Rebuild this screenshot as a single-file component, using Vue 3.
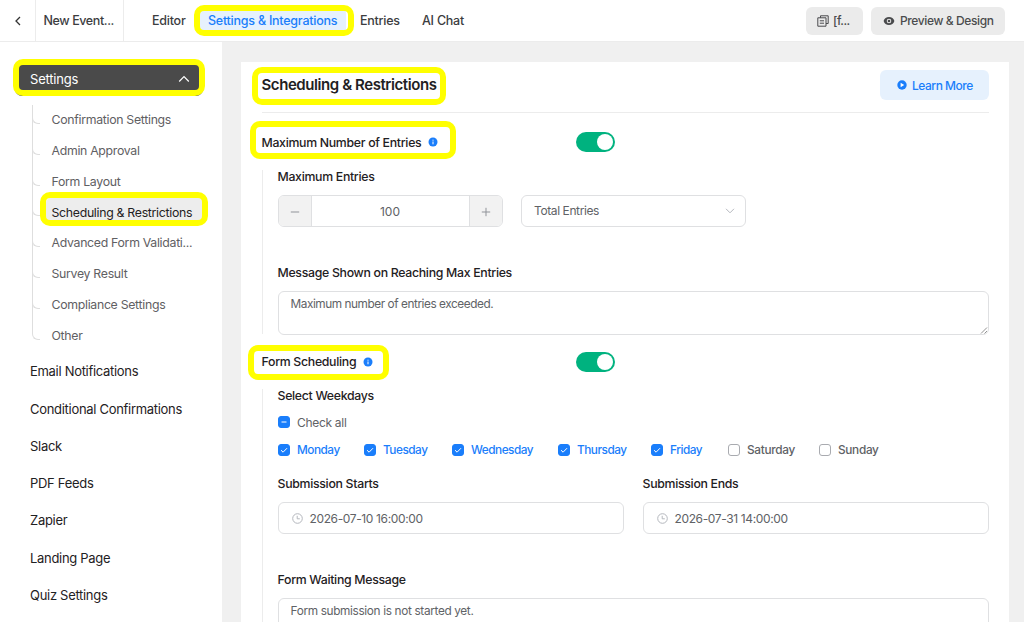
<template>
  <div class="app">
    <header class="topbar">
      <button class="back" aria-label="Back">
        <svg width="8" height="12" viewBox="0 0 8 12"><path d="M6 2 2 6l4 4" /></svg>
      </button>
      <div class="form-name">New Event...</div>
      <nav class="tabs">
        <a
          v-for="tab in tabs"
          :key="tab"
          class="tab"
          :class="{ active: tab === activeTab, marked: tab === activeTab }"
          @click="activeTab = tab"
        >{{ tab }}</a>
      </nav>
      <div class="actions">
        <button class="btn shortcode">
          <svg width="12" height="12" viewBox="0 0 12 12">
            <path d="M3.5 2.8V.8h7.7v7.7H9" />
            <path d="M.8 2.8H9v8.4H.8zM2.8 5.8H7M2.8 8.2H7" />
          </svg>
          <span>[f...</span>
        </button>
        <button class="btn preview">
          <svg width="12" height="10" viewBox="0 0 12 10">
            <path class="fill" fill-rule="evenodd" d="M6 1C3.4 1 1.3 2.6.6 5 1.3 7.4 3.4 9 6 9s4.700-1.600 5.400-4C10.700 2.600 8.600 1 6 1zm0 1.700a2.300 2.300 0 1 1 0 4.600 2.300 2.300 0 0 1 0-4.600z" />
            <circle class="fill" cx="6" cy="5" r="1.3" />
          </svg>
          <span>Preview &amp; Design</span>
        </button>
      </div>
    </header>

    <div class="body">
      <aside class="sidebar">
        <div class="menu-head marked">
          <span>Settings</span>
          <svg width="12" height="8" viewBox="0 0 12 8"><path d="M1.2 6.500 6 1.700l4.800 4.800" /></svg>
        </div>
        <ul class="submenu">
          <li
            v-for="item in subItems"
            :key="item"
            :class="{ current: item === currentItem, marked: item === currentItem }"
          ><span>{{ item }}</span></li>
        </ul>
        <ul class="menu">
          <li v-for="item in menuItems" :key="item">{{ item }}</li>
        </ul>
      </aside>

      <main class="content">
        <section class="card">
          <div class="card-head">
            <h1 class="marked">Scheduling &amp; Restrictions</h1>
            <button class="btn learn">
              <svg width="10" height="10" viewBox="0 0 10 10">
                <circle cx="5" cy="5" r="4.7" />
                <path d="M3.600 2.700v4.600l3.600-2.300z" />
              </svg>
              <span>Learn More</span>
            </button>
          </div>

          <div class="setting">
            <div class="setting-label max marked">
              <span>Maximum Number of Entries</span>
              <svg class="info" width="10" height="10" viewBox="0 0 10 10"><circle cx="5" cy="5" r="4.5" /><path d="M5 4.500v2.800M5 2.700v1" /></svg>
            </div>
            <button class="switch" :class="{ on: limitEntries }" aria-label="Limit entries" @click="limitEntries = !limitEntries"></button>
          </div>
          <div class="group first">
            <label class="lbl">Maximum Entries</label>
            <div class="limit-row">
              <div class="number">
                <button aria-label="Decrease" @click="maxEntries--"><svg width="10" height="10" viewBox="0 0 10 10"><path d="M.8 5h8.400" /></svg></button>
                <span>{{ maxEntries }}</span>
                <button aria-label="Increase" @click="maxEntries++"><svg width="10" height="10" viewBox="0 0 10 10"><path d="M.8 5h8.400M5 .8v8.400" /></svg></button>
              </div>
              <div class="field select">
                <span>Total Entries</span>
                <svg width="10" height="6" viewBox="0 0 10 6"><path d="M1 .8 5 4.800l4-4" /></svg>
              </div>
            </div>
            <label class="lbl message-lbl">Message Shown on Reaching Max Entries</label>
            <div class="area">
              <span class="tight">Maximum number of entries exceeded.</span>
              <svg class="grip" width="8" height="8" viewBox="0 0 8 8"><path d="M1 7.500 7 1.500M4.500 7.500 7 5" /></svg>
            </div>
          </div>

          <div class="setting second">
            <div class="setting-label sched marked">
              <span>Form Scheduling</span>
              <svg class="info" width="10" height="10" viewBox="0 0 10 10"><circle cx="5" cy="5" r="4.5" /><path d="M5 4.500v2.800M5 2.700v1" /></svg>
            </div>
            <button class="switch" :class="{ on: scheduleForm }" aria-label="Schedule form" @click="scheduleForm = !scheduleForm"></button>
          </div>
          <div class="group">
            <label class="lbl">Select Weekdays</label>
            <div class="check all">
              <i class="box on"><svg width="12" height="12" viewBox="0 0 12 12"><path d="M3.500 6h5" /></svg></i>
              <span>Check all</span>
            </div>
            <div class="days">
              <div
                v-for="day in days"
                :key="day.name"
                class="check"
                :class="{ checked: day.on }"
                @click="day.on = !day.on"
              >
                <i class="box" :class="{ on: day.on }">
                  <svg v-if="day.on" width="12" height="12" viewBox="0 0 12 12"><path d="m3 6.200 2.100 2L9 4.200" /></svg>
                </i>
                <span>{{ day.name }}</span>
              </div>
            </div>
            <div class="dates">
              <div v-for="date in dates" :key="date.label">
                <label class="lbl">{{ date.label }}</label>
                <div class="field date">
                  <svg width="11" height="11" viewBox="0 0 11 11"><circle cx="5.500" cy="5.500" r="4.800" /><path d="M5.200 2.800v3h2.600" /></svg>
                  <span>{{ date.value }}</span>
                </div>
              </div>
            </div>
            <label class="lbl waiting-lbl">Form Waiting Message</label>
            <div class="area"><span>Form submission is not started yet.</span></div>
          </div>
        </section>
      </main>
    </div>
  </div>
</template>

<script setup>
import { ref } from 'vue'

const tabs = ['Editor', 'Settings & Integrations', 'Entries', 'AI Chat']
const activeTab = ref('Settings & Integrations')

const subItems = [
  'Confirmation Settings',
  'Admin Approval',
  'Form Layout',
  'Scheduling & Restrictions',
  'Advanced Form Validati...',
  'Survey Result',
  'Compliance Settings',
  'Other'
]
const currentItem = 'Scheduling & Restrictions'

const menuItems = [
  'Email Notifications',
  'Conditional Confirmations',
  'Slack',
  'PDF Feeds',
  'Zapier',
  'Landing Page',
  'Quiz Settings'
]

const limitEntries = ref(true)
const scheduleForm = ref(true)
const maxEntries = ref(100)

const days = ref([
  { name: 'Monday', on: true },
  { name: 'Tuesday', on: true },
  { name: 'Wednesday', on: true },
  { name: 'Thursday', on: true },
  { name: 'Friday', on: true },
  { name: 'Saturday', on: false },
  { name: 'Sunday', on: false }
])

const dates = [
  { label: 'Submission Starts', value: '2026-07-10 16:00:00' },
  { label: 'Submission Ends', value: '2026-07-31 14:00:00' }
]
</script>

<style>
body {
  overflow: hidden;
}
</style>

<style scoped>
.app {
  height: 622px;
  overflow: hidden;
  display: flex;
  flex-direction: column;
  background: #fff;
  color: #1f2123;
  font-family: Inter, "Liberation Sans", sans-serif;
  font-size: 12.3px;
  letter-spacing: -0.3px;
}

.app *,
.app *::after {
  box-sizing: border-box;
}

ul {
  list-style: none;
  margin: 0;
  padding: 0;
}

button {
  border: 0;
  padding: 0;
  background: none;
  font: inherit;
  letter-spacing: inherit;
  cursor: pointer;
}

svg {
  flex: none;
  fill: none;
  stroke: currentColor;
}

span,
a {
  white-space: nowrap;
}

/* yellow marker ring */
.marked {
  position: relative;
}

.marked::after {
  content: "";
  position: absolute;
  border: 6px solid #ff0;
  border-radius: 10px;
  z-index: 2;
}

/* top bar */
.topbar {
  flex: none;
  height: 42px;
  display: flex;
  align-items: center;
  border-bottom: 1px solid #ececec;
  font-size: 12.5px;
  font-weight: 500;
  color: #3c3d3f;
}

.back {
  width: 36px;
  height: 41px;
  display: flex;
  align-items: center;
  justify-content: center;
  border-right: 1px solid #ececec;
  color: #333;
}

.back svg {
  stroke-width: 1.3;
}

.form-name {
  width: 88px;
  height: 41px;
  line-height: 41px;
  padding-left: 7.5px;
  border-right: 1px solid #ececec;
  letter-spacing: -0.4px;
  white-space: nowrap;
}

.tabs {
  display: flex;
  height: 28px;
  line-height: 28px;
  margin-left: 20px;
  letter-spacing: -0.24px;
}

.tab {
  padding: 0 8px;
}

.tab:nth-child(1) {
  width: 56px;
}

.tab:nth-child(2) {
  width: 146px;
}

.tab:nth-child(3) {
  width: 62px;
  margin-left: 6px;
}

.tab.active {
  color: #1a7efb;
  background: #e6f1fd;
  border-radius: 6px;
}

.tab.marked::after {
  inset: -2px -8px -1px -6px;
}

.actions {
  display: flex;
  gap: 8px;
  margin-left: auto;
  margin-right: 19px;
}

.btn {
  display: flex;
  align-items: center;
  border-radius: 6px;
  background: #ebebeb;
  color: #4a4b4d;
  font-size: 12px;
  font-weight: 500;
}

.shortcode {
  width: 57px;
  height: 28px;
  padding-left: 11px;
  gap: 4px;
  letter-spacing: -0.5px;
}

.preview {
  width: 134px;
  height: 28px;
  padding-left: 12px;
  gap: 5px;
  letter-spacing: -0.38px;
}

.fill {
  fill: currentColor;
  stroke: none;
}

/* sidebar */
.body {
  flex: 1;
  display: flex;
  min-height: 0;
}

.sidebar {
  width: 222px;
  flex: none;
  padding: 22px 0 0 15px;
}

.menu-head {
  width: 188px;
  height: 32px;
  padding: 0 13px 2px 15px;
  display: flex;
  align-items: center;
  justify-content: space-between;
  border-radius: 7px;
  background: #4a4a4a;
  color: #fff;
  font-size: 13px;
  letter-spacing: -0.2px;
}

.menu-head svg {
  stroke-width: 1.2;
}

.menu-head.marked::after {
  inset: -5px -2px 0 -2px;
}

.submenu {
  margin: 9px 0 0 17px;
  padding-bottom: 2px;
}

.submenu li {
  position: relative;
  height: 30.8px;
  line-height: 30.8px;
  padding-left: 19.5px;
  color: #5f6063;
}

/* tree branch: trunk plus a rounded foot */
.submenu li::before {
  content: "";
  position: absolute;
  left: 0;
  top: 0;
  width: 7px;
  height: 18px;
  border-left: 1px solid #dedede;
  border-bottom: 1px solid #dedede;
  border-bottom-left-radius: 6px;
}

.submenu li:not(:last-child) {
  background: linear-gradient(#dedede, #dedede) 0 0 / 1px 100% no-repeat;
}

.submenu li.current {
  color: #1f2123;
}

.submenu li.current span {
  display: block;
  width: 158px;
  height: 26px;
  line-height: 31px;
  margin-left: -6px;
  padding-left: 6px;
  border-radius: 6px;
  background: #ededed;
}

.submenu li.current::after {
  left: 8px;
  top: -5px;
  width: 168px;
  height: 34px;
}

.menu li {
  height: 37.25px;
  line-height: 37.25px;
  padding-left: 15px;
  font-size: 13px;
}

/* main card */
.content {
  flex: 1;
  padding: 20px 15px 0 19px;
  background: #f0f0f0;
}

.card {
  height: 600px;
  padding: 0 20px 0 20.5px;
  background: #fff;
}

.card-head {
  height: 51px;
  display: flex;
  justify-content: space-between;
  padding-top: 8px;
  border-bottom: 1px solid #ececec;
}

h1 {
  margin: 0;
  height: 30px;
  line-height: 30px;
  font-size: 15px;
  font-weight: 600;
  letter-spacing: -0.42px;
  white-space: nowrap;
}

h1.marked::after {
  left: -10px;
  top: -3px;
  width: 194px;
  height: 38px;
}

.learn {
  width: 109px;
  height: 30px;
  padding-left: 17px;
  gap: 5px;
  background: #e6f1fd;
  color: #1a7efb;
  letter-spacing: -0.48px;
}

.learn circle {
  fill: currentColor;
  stroke: none;
}

.learn path {
  fill: #fff;
  stroke: none;
}

.setting {
  height: 58px;
  display: grid;
  grid-template-columns: 314.5px auto;
  justify-content: start;
  align-items: center;
}

.setting.second {
  height: 55px;
}

.setting-label {
  display: flex;
  align-items: center;
  gap: 7px;
  font-weight: 500;
}

.max.marked::after {
  left: -12px;
  top: -14px;
  width: 206px;
  height: 38px;
}

.sched.marked::after {
  left: -14px;
  top: -9px;
  width: 141px;
  height: 35px;
}

.info circle {
  fill: #1a7efb;
  stroke: none;
}

.info path {
  stroke: #fff;
}

.switch {
  position: relative;
  width: 39px;
  height: 20px;
  border-radius: 10px;
  background: #c9cbce;
}

.switch::before {
  content: "";
  position: absolute;
  left: 2px;
  top: 2px;
  width: 16px;
  height: 16px;
  border-radius: 50%;
  background: #fff;
}

.switch.on {
  background: #00b27f;
}

.switch.on::before {
  left: 21px;
}

.group {
  padding-left: 15px;
  border-left: 1px solid #ececec;
}

.group.first {
  height: 164px;
  margin-top: -1px;
}

.lbl {
  display: block;
  height: 14px;
  line-height: 14px;
  font-weight: 500;
  white-space: nowrap;
}

.limit-row {
  display: grid;
  grid-template-columns: 225px 225px;
  gap: 18.5px;
  margin-top: 11px;
}

.number {
  height: 32px;
  display: grid;
  grid-template-columns: 33px 1fr 33px;
  border: 1px solid #dfe0e2;
  border-radius: 6px;
  overflow: hidden;
  color: #606266;
  letter-spacing: 0;
}

.number button {
  display: flex;
  align-items: center;
  justify-content: center;
  background: #f2f2f2;
  color: #909399;
}

.number button:first-child {
  border-right: 1px solid #dfe0e2;
}

.number button:last-child {
  border-left: 1px solid #dfe0e2;
}

.number span {
  line-height: 31px;
  text-align: center;
  font-size: 12px;
}

.field {
  height: 32px;
  display: flex;
  align-items: center;
  border: 1px solid #dfe0e2;
  border-radius: 6px;
  color: #606266;
  font-size: 12px;
  letter-spacing: -0.4px;
}

.select {
  justify-content: space-between;
  padding: 0 10px 1px 12px;
}

.select svg {
  color: #b4b7bd;
}

.message-lbl {
  margin-top: 39px;
}

.area {
  position: relative;
  width: 711px;
  height: 44px;
  margin-top: 11px;
  padding: 5px 12px;
  border: 1px solid #dfe0e2;
  border-radius: 6px;
  color: #606266;
  font-size: 11.8px;
  letter-spacing: -0.34px;
  line-height: 15px;
}

.area .tight {
  letter-spacing: -0.44px;
}

.grip {
  position: absolute;
  right: 0;
  bottom: 0;
  color: #777;
  stroke-width: 0.8;
}

.check {
  display: flex;
  align-items: center;
  gap: 7.5px;
  height: 16px;
  color: #606266;
  font-size: 12px;
}

.check.all {
  margin-top: 11px;
}

.days .check {
  font-size: 11.8px;
  font-weight: 500;
}

.days .checked {
  color: #1a7efb;
  letter-spacing: -0.48px;
}

.box {
  width: 12px;
  height: 12px;
  display: flex;
  flex: none;
  align-items: center;
  justify-content: center;
  border: 1px solid #a9abb0;
  border-radius: 3px;
}

.box.on {
  border-color: #1a7efb;
  background: #1a7efb;
  color: #fff;
}

.days {
  display: grid;
  grid-template-columns: 86px 88px 106px 93px 77px 91px 80px;
  margin-top: 12px;
}

.dates {
  display: grid;
  grid-template-columns: 346px 346px;
  gap: 19px;
  margin-top: 19px;
}

.date {
  margin-top: 11px;
  padding-left: 13px;
  gap: 7px;
  letter-spacing: -0.37px;
}

.date svg {
  color: #b4b7bd;
}

.waiting-lbl {
  margin-top: 39px;
}
</style>
